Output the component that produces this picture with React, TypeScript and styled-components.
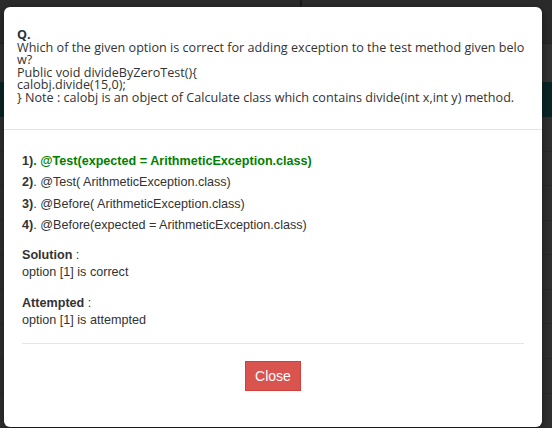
import React from "react";
import styled, { createGlobalStyle } from "styled-components";

const Global = createGlobalStyle`
  html, body { margin: 0; padding: 0; }
  body { width: 552px; height: 428px; overflow: hidden; background: #2f2f2f; font-family: "Liberation Sans", Arial, sans-serif; }
`;

const Page = styled.div`
  position: relative;
  width: 552px;
  height: 428px;
  display: flex;
  flex-direction: column;
  background: #303030;
`;

const TopBar = styled.div`
  height: 45px;
  display: flex;
  background: #2b2b2b;
  border-bottom: 1px solid #262626;
`;

const TopSection = styled.div<{ $w?: number }>`
  width: ${(p) => (p.$w ? `${p.$w}px` : "auto")};
  flex: ${(p) => (p.$w ? "none" : "1")};
  border-right: ${(p) => (p.$w ? "2px solid #1a1a1a" : "none")};
`;

const SubBar = styled.div`
  height: 39px;
  background: #333333;
`;

const TealBand = styled.div`
  height: 37px;
  background: #0a2526;
`;

const BgRow = styled.div`
  height: 35px;
  border-bottom: 1px solid #2a2a2a;
`;

const Modal = styled.div`
  position: absolute;
  left: 4px;
  top: 7px;
  width: 538px;
  height: 420px;
  background: #fff;
  border-radius: 6px;
  display: flex;
  flex-direction: column;
  box-shadow: 0 3px 9px rgba(0, 0, 0, 0.5);
`;

const Header = styled.div`
  padding: 22px 13px 24px 13px;
  border-bottom: 1px solid #e5e5e5;
  font-family: "Open Sans", sans-serif;
  font-size: 12.6px;
  line-height: 12.6px;
  color: #333;
`;

const QLabel = styled.div`
  font-weight: 700;
`;

const Line = styled.div`
  white-space: nowrap;
`;

const Body = styled.div`
  padding: 21px 18px 0 18px;
  font-family: "Liberation Sans", Arial, sans-serif;
  font-size: 12.6px;
  color: #333;
  display: flex;
  flex-direction: column;
`;

const Options = styled.div`
  display: flex;
  flex-direction: column;
`;

const Option = styled.div<{ $correct?: boolean }>`
  line-height: 21.5px;
  color: ${(p) => (p.$correct ? "#008000" : "#333")};
  font-weight: ${(p) => (p.$correct ? 700 : 400)};
`;

const Num = styled.b`
  color: #333;
  font-weight: 700;
`;

const InfoBlock = styled.div<{ $mt: number }>`
  margin-top: ${(p) => p.$mt}px;
  line-height: 17px;
`;

const Label = styled.b`
  font-weight: 700;
`;

const Divider = styled.div`
  margin: 14px 0 0 0;
  height: 1px;
  background: #e5e5e5;
`;

const Footer = styled.div`
  display: flex;
  justify-content: center;
  padding-top: 17px;
`;

const CloseButton = styled.button`
  width: 56px;
  height: 30px;
  background: #d9534f;
  border: 1px solid #d43f3a;
  border-radius: 0;
  color: #fff;
  font-family: "Liberation Sans", Arial, sans-serif;
  font-size: 14px;
  padding: 0;
  cursor: pointer;
`;

const options = [
  "@Test(expected = ArithmeticException.class)",
  "@Test( ArithmeticException.class)",
  "@Before( ArithmeticException.class)",
  "@Before(expected = ArithmeticException.class)",
];

export default function App() {
  return (
    <>
      <Global />
      <Page>
        <TopBar>
          <TopSection $w={300} />
          <TopSection />
        </TopBar>
        <SubBar />
        <TealBand />
        {Array.from({ length: 9 }).map((_, i) => (
          <BgRow key={i} />
        ))}
        <Modal>
          <Header>
            <QLabel>Q.</QLabel>
            <Line>Which of the given option is correct for adding exception to the test method given belo</Line>
            <Line>w?</Line>
            <Line>Public void divideByZeroTest(){"{"}</Line>
            <Line>calobj.divide(15,0);</Line>
            <Line>{"}"} Note : calobj is an object of Calculate class which contains divide(int x,int y) method.</Line>
          </Header>
          <Body>
            <Options>
              {options.map((o, i) => (
                <Option key={i} $correct={i === 0}>
                  <Num>{i + 1})</Num>. {o}
                </Option>
              ))}
            </Options>
            <InfoBlock $mt={10}>
              <div>
                <Label>Solution</Label> :
              </div>
              <div>option [1] is correct</div>
            </InfoBlock>
            <InfoBlock $mt={14}>
              <div>
                <Label>Attempted</Label> :
              </div>
              <div>option [1] is attempted</div>
            </InfoBlock>
            <Divider />
            <Footer>
              <CloseButton>Close</CloseButton>
            </Footer>
          </Body>
        </Modal>
      </Page>
    </>
  );
}
